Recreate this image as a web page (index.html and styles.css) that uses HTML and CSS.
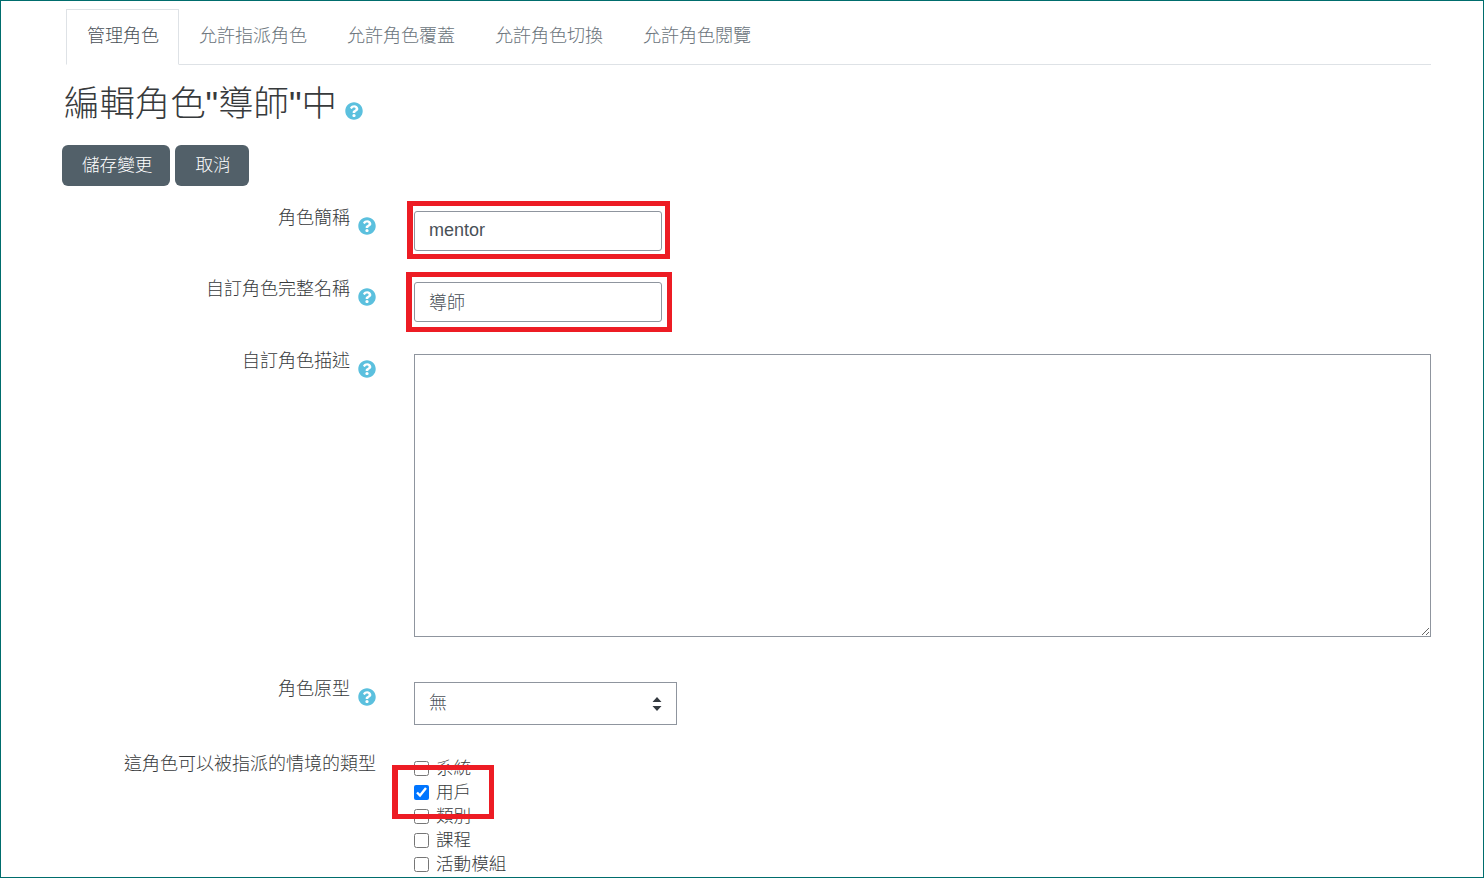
FILE: index.html
```html
<!DOCTYPE html>
<html lang="zh-Hant">
<head>
  <meta charset="UTF-8" />
  <meta name="viewport" content="width=device-width, initial-scale=1.0"/>
  <title>編輯角色</title>
  <link rel="stylesheet" href="styles.css">
</head>
<body>
  <svg class="defs" width="0" height="0">
    <symbol id="help" viewBox="0 0 512 512">
      <path d="M504 256c0 136.997-111.043 248-248 248S8 392.997 8 256C8 119.083 119.043 8 256 8s248 111.083 248 248zM262.655 90c-54.497 0-89.255 22.957-116.549 63.758-3.536 5.286-2.353 12.415 2.715 16.258l34.699 26.31c5.205 3.947 12.621 3.008 16.665-2.122 17.864-22.658 30.113-35.797 57.303-35.797 20.429 0 45.698 13.148 45.698 32.958 0 14.976-12.363 22.667-32.534 33.976C247.128 238.528 216 254.941 216 296v4c0 6.627 5.373 12 12 12h56c6.627 0 12-5.373 12-12v-1.333c0-28.462 83.186-29.647 83.186-106.667 0-58.002-60.165-102-116.531-102zM256 338c-25.365 0-46 20.635-46 46 0 25.364 20.635 46 46 46s46-20.636 46-46c0-25.365-20.635-46-46-46z"/>
    </symbol>
  </svg>

  <div class="page">
    <ul class="tabs">
      <li class="tab active">管理角色</li>
      <li class="tab">允許指派角色</li>
      <li class="tab">允許角色覆蓋</li>
      <li class="tab">允許角色切換</li>
      <li class="tab">允許角色閱覽</li>
    </ul>

    <h1 class="title">編輯角色"導師"中 <svg class="help help-title"><use href="#help"/></svg></h1>

    <div class="actions">
      <button class="btn">儲存變更</button>
      <button class="btn">取消</button>
    </div>

    <form>
      <div class="row row-short">
        <div class="label"><span>角色簡稱</span><svg class="help"><use href="#help"/></svg></div>
        <input class="text-input" value="mentor">
      </div>
      <div class="row row-full">
        <div class="label"><span>自訂角色完整名稱</span><svg class="help"><use href="#help"/></svg></div>
        <input class="text-input text-input-cjk" value="導師">
      </div>
      <div class="row row-desc">
        <div class="label label-up"><span>自訂角色描述</span><svg class="help"><use href="#help"/></svg></div>
        <textarea class="desc"></textarea>
      </div>
      <div class="row row-archetype">
        <div class="label label-up"><span>角色原型</span><svg class="help"><use href="#help"/></svg></div>
        <div class="select-wrap">
          <select class="select"><option>無</option></select>
          <svg class="select-arrows" viewBox="0 0 10 14"><path d="M5 0l4.5 5h-9zM5 14L.5 9h9z"/></svg>
        </div>
      </div>
      <div class="row">
        <div class="label"><span>這角色可以被指派的情境的類型</span></div>
        <div class="checks">
          <label class="check"><input type="checkbox">系統</label>
          <label class="check"><input type="checkbox" checked>用戶</label>
          <label class="check"><input type="checkbox">類別</label>
          <label class="check"><input type="checkbox">課程</label>
          <label class="check"><input type="checkbox">活動模組</label>
        </div>
      </div>
    </form>

    <!-- red annotation boxes drawn over the form -->
    <div class="mark mark-short"></div>
    <div class="mark mark-full"></div>
    <div class="mark mark-check"></div>
  </div>
</body>
</html>
```

FILE: styles.css
```css
html, body {
  margin: 0;
  height: 100%;
  overflow: hidden;
}
body {
  font-family: 'Liberation Sans', 'Noto Sans CJK TC', sans-serif;
  font-size: 18px;
  font-weight: 300;
  color: #373a3c;
  background: #fff;
}
.defs {
  position: absolute;
}
.page {
  position: relative;
  box-sizing: border-box;
  height: 100vh;
  border: 1px solid #006d6d;
  padding: 8px 52px 0 61px;
  overflow: hidden;
}

.tabs {
  display: flex;
  list-style: none;
  margin: 0 0 0 4px;
  padding: 0;
  height: 56px;
  box-sizing: border-box;
  border-bottom: 1px solid #dee2e6;
}
.tab {
  height: 55px;
  line-height: 55px;
  padding: 0 20px;
  color: #6a737b;
}
.tab.active {
  height: 56px;
  line-height: 53px;
  padding: 0 19px 0 20px;
  border: 1px solid #dee2e6;
  border-bottom-color: #fff;
  box-sizing: border-box;
  color: #495057;
}
.tab.active + .tab {
  padding-left: 20px;
}

.title {
  margin: 18px 0 20px 2px;
  font-size: 35.4px;
  line-height: 42px;
  font-weight: 300;
  white-space: nowrap;
}
.help {
  width: 18px;
  height: 18px;
  flex: none;
  fill: #5bc0de;
  margin-top: 7px;
}
.help-title {
  margin: 0 0 0 -2px;
  vertical-align: -4px;
}

.actions {
  display: flex;
  gap: 5px;
  margin-bottom: 24px;
}
.btn {
  height: 41px;
  padding: 0 18px 4px 20px;
  border: 0;
  border-radius: 6px;
  background: #526069;
  color: #fff;
  font: inherit;
  font-size: 17.6px;
  cursor: pointer;
}

.row {
  display: grid;
  grid-template-columns: 314px 1017px;
  column-gap: 38px;
  align-items: start;
}
.row-short { margin-bottom: 30px; }
.row-full { margin-bottom: 32px; }
.row-desc { margin-bottom: 45px; }
.row-archetype { margin-bottom: 31px; }

.label {
  display: flex;
  justify-content: flex-end;
  gap: 8px;
  line-height: 16px;
  white-space: nowrap;
}
.label .help {
  margin-right: 0;
}
.label-up {
  margin-top: -1px;
}

.text-input {
  box-sizing: border-box;
  width: 248px;
  height: 40px;
  margin-top: 1px;
  padding: 0 14px 1px;
  border: 1px solid #8f959e;
  border-radius: 3px;
  font: inherit;
  color: #495057;
}
.text-input-cjk {
  padding-bottom: 3px;
}
.desc {
  display: block;
  box-sizing: border-box;
  width: 1017px;
  height: 283px;
  margin: 0;
  padding: 6px 14px;
  border: 1px solid #8f959e;
  border-radius: 0;
  font: inherit;
}
.select-wrap {
  position: relative;
  width: 263px;
}
.select {
  display: block;
  box-sizing: border-box;
  width: 100%;
  height: 43px;
  padding: 0 14px 2px;
  border: 1px solid #8f959e;
  border-radius: 0;
  background: #fff;
  appearance: none;
  font: inherit;
  color: #495057;
}
.select-arrows {
  position: absolute;
  top: 15px;
  right: 15px;
  width: 10px;
  height: 14px;
  fill: #343a40;
  pointer-events: none;
}

.checks {
  display: flex;
  flex-direction: column;
}
.check {
  display: flex;
  align-items: center;
  gap: 7px;
  height: 24px;
  font-size: 17.6px;
  line-height: 22px;
  white-space: nowrap;
}
.check input {
  width: 15px;
  height: 15px;
  margin: 0;
}

.mark {
  position: absolute;
  box-sizing: border-box;
  border: 5px solid #ed1c24;
  border-left-width: 6px;
  pointer-events: none;
}
.mark-short { left: 406px; top: 200px; width: 263px; height: 58px; }
.mark-full { left: 405px; top: 271px; width: 266px; height: 60px; }
.mark-check { left: 391px; top: 764px; width: 102px; height: 54px; }
```
